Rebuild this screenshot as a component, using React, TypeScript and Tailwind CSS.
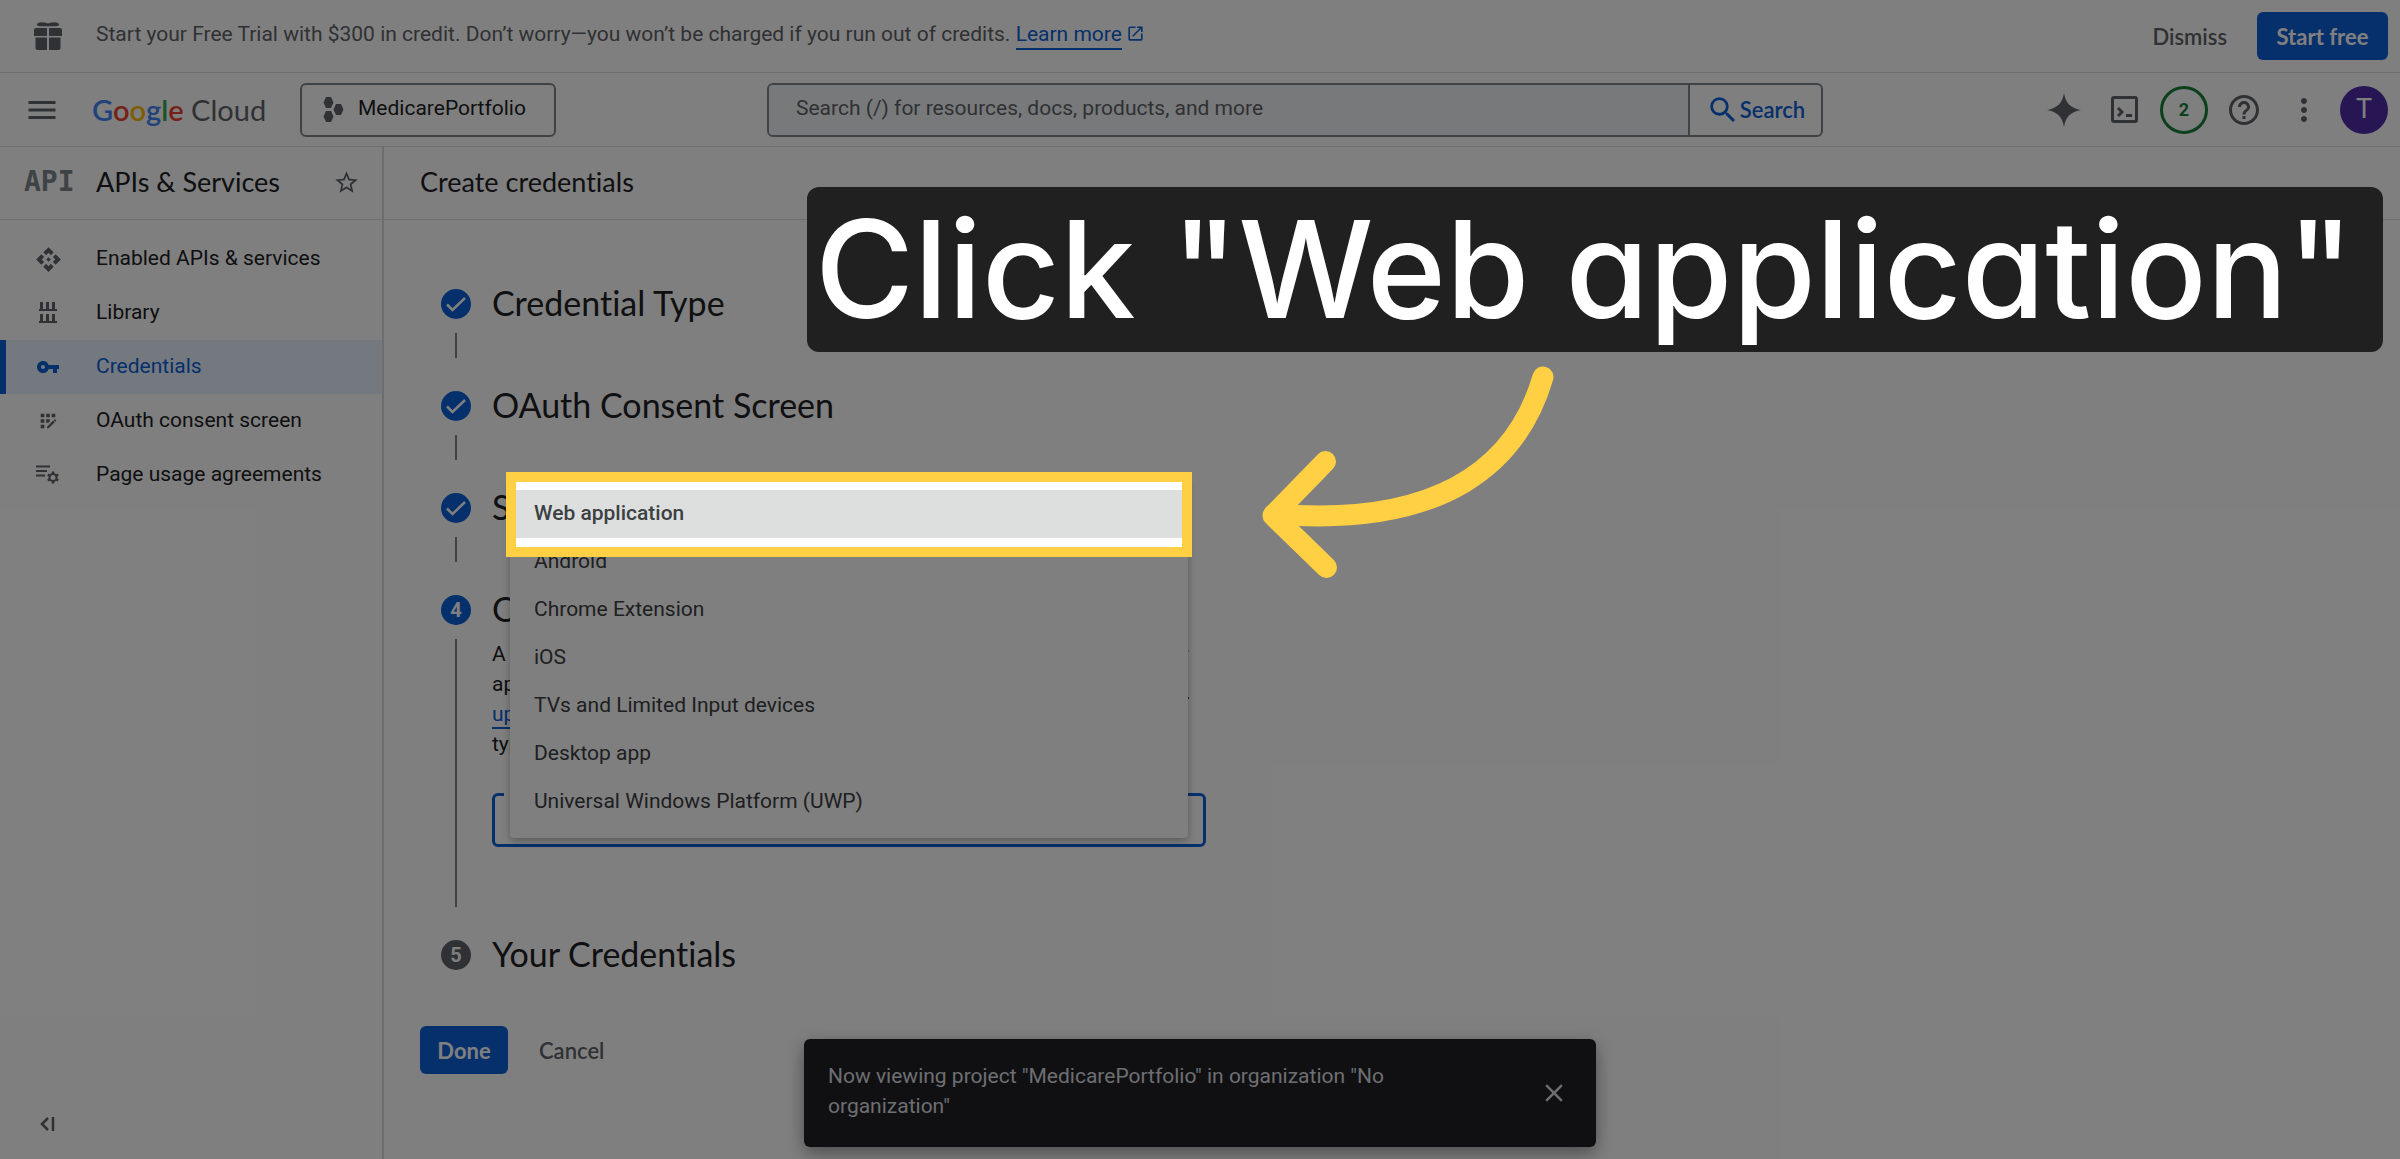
import { ReactNode } from "react";
import {
  MdApi,
  MdAppRegistration,
  MdClose,
  MdHelpOutline,
  MdMenu,
  MdMoreVert,
  MdOpenInNew,
  MdOutlineSettings,
  MdSearch,
  MdStarBorder,
  MdVpnKey,
} from "react-icons/md";

const NAV_ITEMS = [
  { label: "Enabled APIs & services", icon: <MdApi size={27} /> },
  { label: "Library", icon: <LibraryIcon /> },
  { label: "Credentials", icon: <MdVpnKey size={24} />, active: true },
  { label: "OAuth consent screen", icon: <MdAppRegistration size={22} /> },
  { label: "Page usage agreements", icon: <AgreementsIcon /> },
];

const APP_TYPES = [
  "Android",
  "Chrome Extension",
  "iOS",
  "TVs and Limited Input devices",
  "Desktop app",
  "Universal Windows Platform (UWP)",
];

function GiftIcon() {
  return (
    <svg width="28" height="30" viewBox="0 0 28 30" fill="currentColor" aria-hidden="true">
      <path d="M14 5.500C11 4.500 5 6.500 3 4C2.500 1 9 .500 14 2.500C19 .500 25.500 1 25 4C23 6.500 17 4.500 14 5.500Z" />
      <path d="M2 7h11v8H0V9a2 2 0 0 1 2-2ZM15 7h11a2 2 0 0 1 2 2v6H15ZM1.500 16.500H13V29H3.500a2 2 0 0 1-2-2ZM15 16.500h11.500V27a2 2 0 0 1-2 2H15Z" />
    </svg>
  );
}

function LibraryIcon() {
  return (
    <svg width="18" height="22" viewBox="0 0 18 22" fill="currentColor" aria-hidden="true">
      <path d="M1 0h3v7h3V0h3v7h3V0h3v7h2v2H0V7h1ZM1 12h3v7h3v-7h3v7h3v-7h3v7h2v2H0v-2h1Z" />
    </svg>
  );
}

function AgreementsIcon() {
  return (
    <svg width="24" height="20" viewBox="0 0 24 20" fill="none" stroke="currentColor" aria-hidden="true">
      <path d="M0 1.500h14M0 6h11M0 10.500h9" strokeWidth="2" />
      <circle cx="17" cy="12.500" r="3.500" strokeWidth="2" />
      <path
        d="M17 6.500v2.500M17 16v2.500M11.800 9.500l2.200 1.300M20 14.200l2.200 1.300M22.200 9.500L20 10.800M14 14.200l-2.200 1.300"
        strokeWidth="2.500"
      />
    </svg>
  );
}

function ProjectIcon() {
  return (
    <svg width="21" height="26" viewBox="0 0 21 26" fill="currentColor" aria-hidden="true">
      <path d="M3 0h5l2.500 5.500L8 11H3L.500 5.500ZM3 14h5l2.500 5.500L8 25H3L.500 19.500ZM13 7h5l2.500 5.500-2.500 5.500h-5l-2.500-5.500Z" />
    </svg>
  );
}

function SparkIcon() {
  return (
    <svg width="34" height="34" viewBox="0 0 34 34" fill="currentColor" aria-hidden="true">
      <path d="M17 0C18.500 10 24 15.500 34 17C24 18.500 18.500 24 17 34C15.500 24 10 18.500 0 17C10 15.500 15.500 10 17 0Z" />
    </svg>
  );
}

function ShellIcon() {
  return (
    <svg width="27" height="27" viewBox="0 0 27 27" fill="none" stroke="currentColor" strokeWidth="3" aria-hidden="true">
      <rect x="1.500" y="1.500" width="24" height="24" rx="1.500" />
      <path d="M7 12l4 4-4 4M15 19.500h6" />
    </svg>
  );
}

function CollapseIcon() {
  return (
    <svg width="15" height="14" viewBox="0 0 15 14" fill="none" stroke="currentColor" strokeWidth="2.500" aria-hidden="true">
      <path d="M8 1L2 7l6 6M13 0v14" />
    </svg>
  );
}

function CheckBadge() {
  return (
    <svg width="30" height="30" viewBox="0 0 30 30" aria-hidden="true">
      <circle cx="15" cy="15" r="15" fill="#0b60d8" />
      <path d="M6 15.500l5.500 5.500L24 9" fill="none" stroke="#fff" strokeWidth="2.500" />
    </svg>
  );
}

function NumberBadge({ n, active }: { n: number; active?: boolean }) {
  return (
    <span
      className={`flex size-[30px] items-center justify-center rounded-full text-xl font-bold text-white ${
        active ? "bg-[#0b60d8]" : "bg-[#5f6368]"
      }`}
    >
      {n}
    </span>
  );
}

function DocLink({ children }: { children: ReactNode }) {
  return (
    <>
      <a href="#" className="text-[#0b60d8] underline decoration-2 underline-offset-6">
        {children}
      </a>
      <MdOpenInNew size={19} className="ml-1 inline align-[-2px] text-[#0b60d8]" />
    </>
  );
}

type StepProps = {
  title: string;
  badge: ReactNode;
  last?: boolean;
  children?: ReactNode;
};

function Step({ title, badge, last, children }: StepProps) {
  return (
    <li className="flex gap-[21px]">
      <div className="flex w-[30px] flex-col items-center gap-[14px] pt-[3px]">
        {badge}
        {!last && <span className="mb-[30px] min-h-[25px] w-[2px] flex-1 bg-[#80868b]" />}
      </div>
      <div className="flex-1">
        <h2 className="font-['Lato',sans-serif] text-[34px] leading-[34px]">{title}</h2>
        {children}
      </div>
    </li>
  );
}

function PromoBar() {
  return (
    <div className="flex h-[73px] items-center border-b border-[#dadce0] pr-3 pl-[34px] text-[#5f6368]">
      <GiftIcon />
      <p className="ml-[34px] flex-1 pb-0.5 text-[21px]">
        Start your Free Trial with $300 in credit. Don’t worry—you won’t be charged if you run out of credits.{" "}
        <a href="#" className="border-b-2 border-[#0b60d8] pb-0.5 text-[#0b60d8]">
          Learn more
        </a>
        <MdOpenInNew size={19} className="ml-1 inline align-[-2px] text-[#0b60d8]" />
      </p>
      <button className="px-[30px] font-['Lato',sans-serif] text-[22px] font-semibold">Dismiss</button>
      <button className="h-12 w-[131px] rounded-md bg-[#0b60d8] font-['Lato',sans-serif] text-[22px] font-bold text-white">
        Start free
      </button>
    </div>
  );
}

function TopBar() {
  return (
    <header className="flex h-[74px] items-center border-b border-[#dadce0] pr-[6px] pl-6 text-[#5f6368]">
      <button aria-label="Navigation menu">
        <MdMenu size={36} />
      </button>
      <a href="#" className="ml-8 w-[208px] font-['Lato',sans-serif] text-[29px] whitespace-nowrap">
        <span className="font-semibold">
          <span className="text-[#4285f4]">G</span>
          <span className="text-[#ea4335]">o</span>
          <span className="text-[#fbbc04]">o</span>
          <span className="text-[#4285f4]">g</span>
          <span className="text-[#34a853]">l</span>
          <span className="text-[#ea4335]">e</span>
        </span>{" "}
        Cloud
      </a>
      <button className="flex h-[54px] min-w-[256px] items-center gap-[14px] rounded-md border-2 border-[#80868b] px-[21px] text-[21px]">
        <ProjectIcon />
        <span className="pb-0.5 text-[#202124]">MedicarePortfolio</span>
      </button>
      <form className="mx-auto flex h-[54px] w-[1056px] overflow-hidden rounded-md border-2 border-[#80868b]">
        <input
          aria-label="Search"
          placeholder="Search (/) for resources, docs, products, and more"
          className="flex-1 border-r-2 border-[#80868b] bg-[#f1f3f4] px-[27px] pb-0.5 text-[21px] placeholder:text-[#5f6368]"
        />
        <button
          type="button"
          className="flex w-[131px] items-center justify-center font-['Lato',sans-serif] text-[22px] font-semibold text-[#0b60d8]"
        >
          <MdSearch size={34} />
          Search
        </button>
      </form>
      <div className="grid grid-cols-6 [&>*]:flex [&>*]:h-12 [&>*]:w-[60px] [&>*]:items-center [&>*]:justify-center">
        <button aria-label="Gemini">
          <SparkIcon />
        </button>
        <button aria-label="Cloud Shell">
          <ShellIcon />
        </button>
        <button aria-label="Notifications">
          <span className="flex size-12 items-center justify-center rounded-full border-3 border-[#188038] text-lg font-bold text-[#188038]">
            2
          </span>
        </button>
        <button aria-label="Help">
          <MdHelpOutline size={36} />
        </button>
        <button aria-label="More options">
          <MdMoreVert size={36} />
        </button>
        <button aria-label="Account">
          <span className="flex size-12 items-center justify-center rounded-full bg-[#512da8] text-[27px] text-white">
            T
          </span>
        </button>
      </div>
    </header>
  );
}

function Sidebar() {
  return (
    <aside className="flex w-96 shrink-0 flex-col border-r-2 border-[#dadce0]">
      <div className="flex h-[73px] items-center border-b border-[#dadce0] pr-[22px] pb-0.5 pl-6">
        <span className="w-[72px] font-['DejaVu_Sans_Mono',monospace] text-[28px] font-bold text-[#80868b]">API</span>
        <h2 className="flex-1 font-['Lato',sans-serif] text-[27px]">APIs &amp; Services</h2>
        <button aria-label="Pin product" className="text-[#5f6368]">
          <MdStarBorder size={27} />
        </button>
      </div>
      <nav className="flex flex-1 flex-col pt-3">
        {NAV_ITEMS.map((item) => (
          <a
            key={item.label}
            href="#"
            className={`flex h-[54px] items-center border-l-6 text-[21px] ${
              item.active ? "border-[#0b60d8] bg-[#e8f0fe] text-[#0b60d8]" : "border-transparent"
            }`}
          >
            <span className={`flex w-[84px] justify-center ${item.active ? "" : "text-[#5f6368]"}`}>{item.icon}</span>
            <span className="pl-[6px]">{item.label}</span>
          </a>
        ))}
      </nav>
      <button aria-label="Collapse menu" className="mb-7 ml-10 self-start text-[#5f6368]">
        <CollapseIcon />
      </button>
    </aside>
  );
}

function AppTypeMenu() {
  return (
    <ul
      role="listbox"
      aria-label="Application type"
      className="absolute -top-[315px] right-[18px] left-[18px] rounded-sm bg-white py-3 text-[21px] shadow-[0_3px_8px_rgba(0,0,0,.3)]"
    >
      <li role="option" aria-selected="true" className="relative z-20 h-12">
        {/* spotlight round the option, sits above the page dimmer */}
        <div className="absolute -inset-x-1 -top-[18px] -bottom-[19px] border-10 border-[#ffd043] bg-white pt-2">
          <button className="h-12 w-full bg-[#dddfde] px-[18px] text-left font-medium text-[#3c4043]">
            Web application
          </button>
        </div>
      </li>
      {APP_TYPES.map((type) => (
        <li key={type} role="option" aria-selected="false" className="flex h-12 items-center px-6 text-[#3c4043]">
          {type}
        </li>
      ))}
    </ul>
  );
}

function Toast() {
  return (
    <div
      role="status"
      className="absolute bottom-3 left-1/2 flex h-[108px] w-[792px] -translate-x-1/2 items-center justify-between rounded-md bg-[#202124] px-6 text-[21px] leading-[30px] text-[#dadce0] shadow-[0_6px_18px_rgba(0,0,0,.4)]"
    >
      <p className="max-w-[600px] pb-1">Now viewing project "MedicarePortfolio" in organization "No organization"</p>
      <button aria-label="Close">
        <MdClose size={30} className="mr-[3px]" />
      </button>
    </div>
  );
}

function Callout() {
  return (
    <>
      <div className="absolute top-[187px] right-[17px] left-[807px] z-30 flex h-[165px] items-center rounded-xl bg-[#202020] pl-2">
        <p className="font-['Inter',sans-serif] text-[135px] leading-none font-medium whitespace-nowrap text-white [font-feature-settings:'cv11']">
          Click "Web application"
        </p>
      </div>
      <svg
        className="absolute top-[360px] left-[1250px] z-30"
        width="320"
        height="230"
        viewBox="1250 360 320 230"
        fill="none"
        stroke="#ffd043"
        strokeWidth="21"
        strokeLinecap="round"
        strokeLinejoin="round"
        aria-hidden="true"
      >
        <path d="M1543 377C1518 462 1446 528 1274 514" />
        <path d="M1325.500 461.500L1273 515.500L1326.500 567.500" />
      </svg>
    </>
  );
}

export default function App() {
  return (
    <div className="relative flex min-h-screen flex-col overflow-hidden bg-white font-['Roboto',sans-serif] text-[#202124] [font-variant-ligatures:none]">
      <PromoBar />
      <TopBar />
      <div className="flex flex-1">
        <Sidebar />
        <main className="flex-1">
          <div className="flex h-[73px] items-center border-b border-[#dadce0] px-9 pb-0.5">
            <h1 className="font-['Lato',sans-serif] text-[27px]">Create credentials</h1>
          </div>
          <ol className="w-[822px] pt-[66px] pl-[57px]">
            <Step title="Credential Type" badge={<CheckBadge />} />
            <Step title="OAuth Consent Screen" badge={<CheckBadge />} />
            <Step title="Scopes" badge={<CheckBadge />} />
            <Step title="OAuth Client ID" badge={<NumberBadge n={4} active />}>
              <p className="mt-[13px] text-[21px] leading-[30px]">
                A client ID is used to identify a single app to Google's OAuth servers. If your app runs on multiple
                platforms, each will need its own client ID. See <DocLink>Setting up OAuth 2.0</DocLink> for more
                information. <DocLink>Learn more</DocLink> about OAuth client types.
              </p>
              <div className="relative mt-[34px] mb-[90px]">
                <button
                  aria-label="Application type"
                  aria-haspopup="listbox"
                  className="block h-[54px] w-full rounded-md border-3 border-[#0b60d8]"
                />
                {/* notch in the outline for the floating label */}
                <span className="absolute top-0 left-3 h-[3px] w-40 bg-white" />
                <AppTypeMenu />
              </div>
            </Step>
            <Step title="Your Credentials" badge={<NumberBadge n={5} />} last />
          </ol>
          <div className="flex items-center gap-1 px-9 pt-[55px] font-['Lato',sans-serif] text-[22px]">
            <button className="h-12 w-[88px] rounded-md bg-[#0b60d8] font-bold text-white">Done</button>
            <button className="h-12 px-[27px] font-semibold text-[#5f6368]">Cancel</button>
          </div>
        </main>
      </div>
      <Toast />
      <div className="pointer-events-none absolute inset-0 z-10 bg-black/50" />
      <Callout />
    </div>
  );
}
